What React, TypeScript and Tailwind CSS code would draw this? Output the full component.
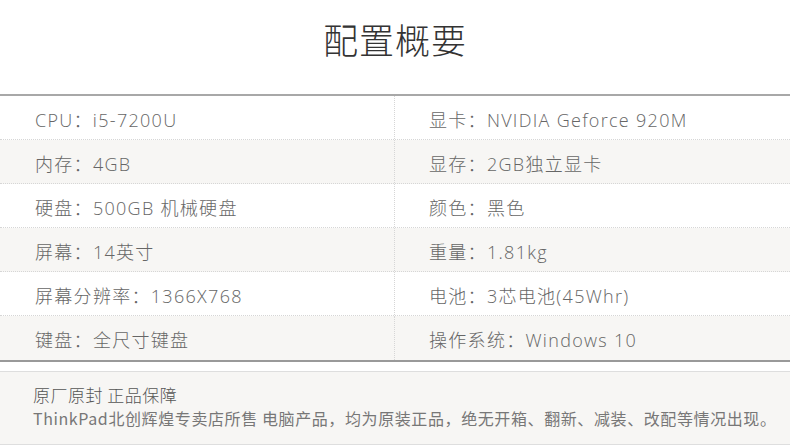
import React from "react";

const rows: [string, string][] = [
  ["CPU：i5-7200U", "显卡：NVIDIA Geforce 920M"],
  ["内存：4GB", "显存：2GB独立显卡"],
  ["硬盘：500GB 机械硬盘", "颜色：黑色"],
  ["屏幕：14英寸", "重量：1.81kg"],
  ["屏幕分辨率：1366X768", "电池：3芯电池(45Whr)"],
  ["键盘：全尺寸键盘", "操作系统：Windows 10"],
];

const rowFont = { fontFamily: '"Open Sans", "Noto Sans CJK SC", sans-serif' };

export default function App() {
  return (
    <div
      className="w-[790px] h-[445px] bg-white overflow-hidden"
      style={{ fontFamily: '"Noto Sans CJK SC", "Noto Sans", sans-serif' }}
    >
      <div className="h-[94px] flex items-center justify-center pb-[15px]">
        <h1 className="text-[35px] font-light text-[#333] tracking-[1px]">配置概要</h1>
      </div>
      <div className="border-t-2 border-[#a8a8a8] border-b-2 border-b-[#999]">
        {rows.map((r, i) => (
          <div
            key={i}
            className={`flex h-[44px] ${i < rows.length - 1 ? "border-b border-dotted border-[#d6d6d6]" : ""} ${
              i % 2 === 1 ? "bg-[#f7f6f4]" : "bg-white"
            }`}
            style={rowFont}
          >
            <div className="w-[395px] border-r border-dotted border-[#d6d6d6] flex items-center pl-[35px] pt-[5px] text-[18px] font-light text-[#666] tracking-[1.3px]">
              {r[0]}
            </div>
            <div className="flex-1 flex items-center pl-[34px] pt-[5px] text-[18px] font-light text-[#666] tracking-[1.3px]">
              {r[1]}
            </div>
          </div>
        ))}
      </div>
      <div className="mt-[9px] h-[74px] bg-[#f7f6f4] border-t border-b border-[#dedede] pl-[33px] pt-[11px]">
        <div className="text-[17px] font-light text-[#555] leading-[23px] tracking-[0.5px]">原厂原封 正品保障</div>
        <div className="text-[16px] text-[#777] leading-[24px] tracking-[0.6px]">
          ThinkPad北创辉煌专卖店所售 电脑产品，均为原装正品，绝无开箱、翻新、减装、改配等情况出现。
        </div>
      </div>
    </div>
  );
}
